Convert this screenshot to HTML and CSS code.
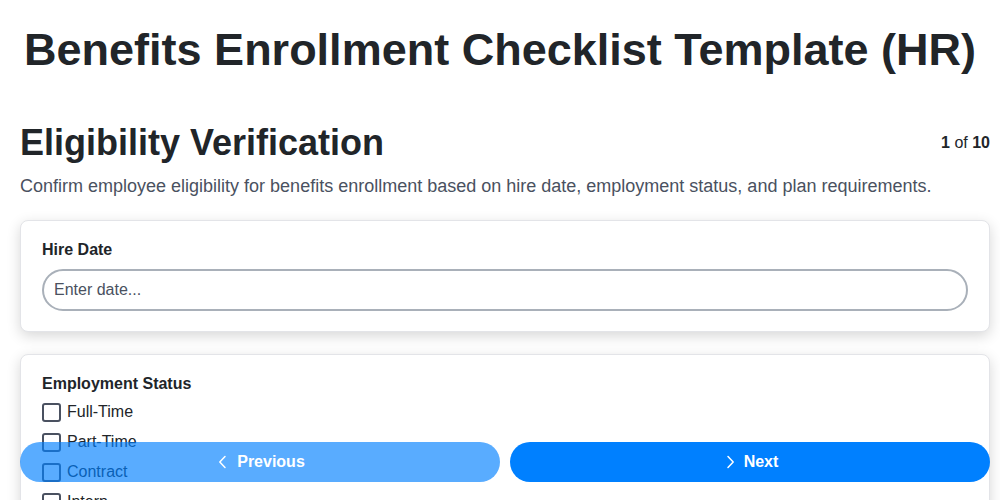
FILE: index.html
```html
<!DOCTYPE html>
<html lang="en">
<head>
<meta charset="utf-8">
<title>Benefits Enrollment Checklist Template (HR)</title>
<link rel="stylesheet" href="styles.css">
</head>
<body>
<main class="page">
  <h1 class="title">Benefits Enrollment Checklist Template (HR)</h1>
  <section class="step">
    <div class="step-head">
      <h2 class="step-title">Eligibility Verification</h2>
      <div class="step-count"><b>1</b> of <b>10</b></div>
    </div>
    <p class="step-desc">Confirm employee eligibility for benefits enrollment based on hire date, employment status, and plan requirements.</p>
    <div class="card">
      <label class="field-label" for="hire">Hire Date</label>
      <input class="text-input" id="hire" type="text" placeholder="Enter date...">
    </div>
    <div class="card">
      <div class="field-label field-label-tight">Employment Status</div>
      <ul class="options">
        <li class="option"><span class="box"></span>Full-Time</li>
        <li class="option"><span class="box"></span>Part-Time</li>
        <li class="option"><span class="box"></span>Contract</li>
        <li class="option"><span class="box"></span>Intern</li>
        <li class="option"><span class="box"></span>Temporary</li>
      </ul>
    </div>
  </section>
</main>
<nav class="nav">
  <button class="btn btn-prev" type="button">
    <svg class="chev" viewBox="0 0 16 16" width="16" height="16"><path d="M10 2.5 L4.8 8 L10 13.5" fill="none" stroke="currentColor" stroke-width="1.5" stroke-linecap="round" stroke-linejoin="round"/></svg>
    Previous
  </button>
  <button class="btn btn-next" type="button">
    <svg class="chev" viewBox="0 0 16 16" width="16" height="16"><path d="M6 2.5 L11.2 8 L6 13.5" fill="none" stroke="currentColor" stroke-width="1.5" stroke-linecap="round" stroke-linejoin="round"/></svg>
    Next
  </button>
</nav>
</body>
</html>
```
FILE: styles.css
```css
* { box-sizing: border-box; }
html, body { margin: 0; padding: 0; background: #ffffff; }
body {
  font-family: "Liberation Sans", Arial, sans-serif;
  color: #212529;
  font-size: 16px;
}
.page { padding: 0; }
.title {
  margin: 0;
  padding-top: 24px;
  font-size: 45px;
  line-height: 52px;
  font-weight: 700;
  text-align: center;
  color: #212529;
}
.step { margin-top: 46px; padding: 0 10px 0 20px; }
.step-head {
  display: flex;
  justify-content: space-between;
  align-items: center;
}
.step-title {
  margin: 0;
  font-size: 36px;
  line-height: 42px;
  font-weight: 700;
}
.step-count { font-size: 16px; color: #212529; }
.step-count b { font-weight: 700; }
.step-desc {
  margin: 11px 0 23px;
  color: #4a5160;
  font-size: 18px;
  line-height: 22px;
}
.card {
  background: #fff;
  border: 1px solid #e3e4e8;
  border-radius: 8px;
  box-shadow: 0 4px 14px rgba(0,0,0,0.16);
  padding: 20px 21px 20px;
  margin-bottom: 22px;
}
.field-label {
  display: block;
  font-weight: 700;
  font-size: 16px;
  line-height: 18px;
  margin-bottom: 10px;
}
.field-label-tight { margin-bottom: 4px; }
.text-input {
  display: block;
  width: 100%;
  height: 42px;
  border: 2px solid #a9b0b9;
  border-radius: 21px;
  padding: 0 10px;
  font-family: inherit;
  font-size: 16px;
  color: #212529;
  background: #fff;
}
.text-input::placeholder { color: #4a5160; opacity: 1; }
.options { list-style: none; margin: 0; padding: 0; }
.option {
  display: flex;
  align-items: center;
  gap: 6px;
  height: 30px;
  font-size: 16px;
  color: #212529;
}
.box {
  width: 19px;
  height: 19px;
  border: 2px solid #4a5160;
  border-radius: 3px;
  flex: none;
}
.nav {
  position: fixed;
  left: 20px;
  right: 10px;
  bottom: 18px;
  display: flex;
  gap: 10px;
}
.btn {
  flex: 1;
  height: 40px;
  border: none;
  border-radius: 20px;
  background: #0080ff;
  color: #fff;
  font-family: inherit;
  font-size: 16px;
  font-weight: 700;
  display: flex;
  align-items: center;
  justify-content: center;
  gap: 6px;
}
.btn-prev { opacity: 0.65; }
.chev { display: block; }
```
